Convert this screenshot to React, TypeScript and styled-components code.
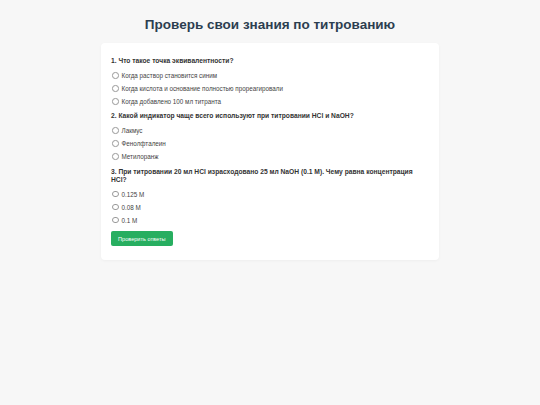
import React from 'react';
import styled, {createGlobalStyle} from 'styled-components';

const Global = createGlobalStyle`
  body {
    margin: 0;
    background: #f7f7f7;
    font-family: "Liberation Sans", Arial, sans-serif;
  }
`;

const Page = styled.div`
  padding: 16px 0 20px;
`;

const Title = styled.h1`
  margin: 0 0 9px;
  text-align: center;
  font-size: 13.5px;
  line-height: 18px;
  color: #2c3e50;
`;

const Card = styled.div`
  width: 318px;
  margin: 0 auto;
  background: white;
  border-radius: 4px;
  padding: 14px 10px 14px;
  box-shadow: 0 1px 3px rgba(0, 0, 0, 0.04);
`;

const Question = styled.div`
  margin-bottom: 4.5px;
`;

const QText = styled.p`
  margin: 0 0 3.5px;
  font-size: 6.7px;
  font-weight: bold;
  line-height: 8.3px;
  color: #333;
`;

const Option = styled.label`
  display: flex;
  align-items: center;
  gap: 3px;
  height: 13px;
  font-size: 6.3px;
  color: #444;
`;

const Radio = styled.span`
  width: 4.5px;
  height: 4.5px;
  margin-left: 1px;
  border: 0.6px solid #999;
  border-radius: 50%;
  background: white;
`;

const Button = styled.button`
  display: block;
  margin-top: 2px;
  border: none;
  border-radius: 2px;
  background: #27ae60;
  color: white;
  font-family: inherit;
  font-size: 5.6px;
  padding: 0 7px;
  height: 15px;
`;

const questions = [
  {
    text: '1. Что такое точка эквивалентности?',
    options: [
      'Когда раствор становится синим',
      'Когда кислота и основание полностью прореагировали',
      'Когда добавлено 100 мл титранта',
    ],
  },
  {
    text: '2. Какой индикатор чаще всего используют при титровании HCl и NaOH?',
    options: ['Лакмус', 'Фенолфталеин', 'Метилоранж'],
  },
  {
    text: '3. При титровании 20 мл HCl израсходовано 25 мл NaOH (0.1 M). Чему равна концентрация HCl?',
    options: ['0.125 M', '0.08 M', '0.1 M'],
  },
];

function App() {
  return (
    <Page>
      <Global/>
      <Title>Проверь свои знания по титрованию</Title>
      <Card>
        {questions.map(q =>
          <Question key={q.text}>
            <QText>{q.text}</QText>
            {q.options.map(o =>
              <Option key={o}>
                <Radio/>
                <span>{o}</span>
              </Option>
            )}
          </Question>
        )}
        <Button>Проверить ответы</Button>
      </Card>
    </Page>
  );
}

export default App;
